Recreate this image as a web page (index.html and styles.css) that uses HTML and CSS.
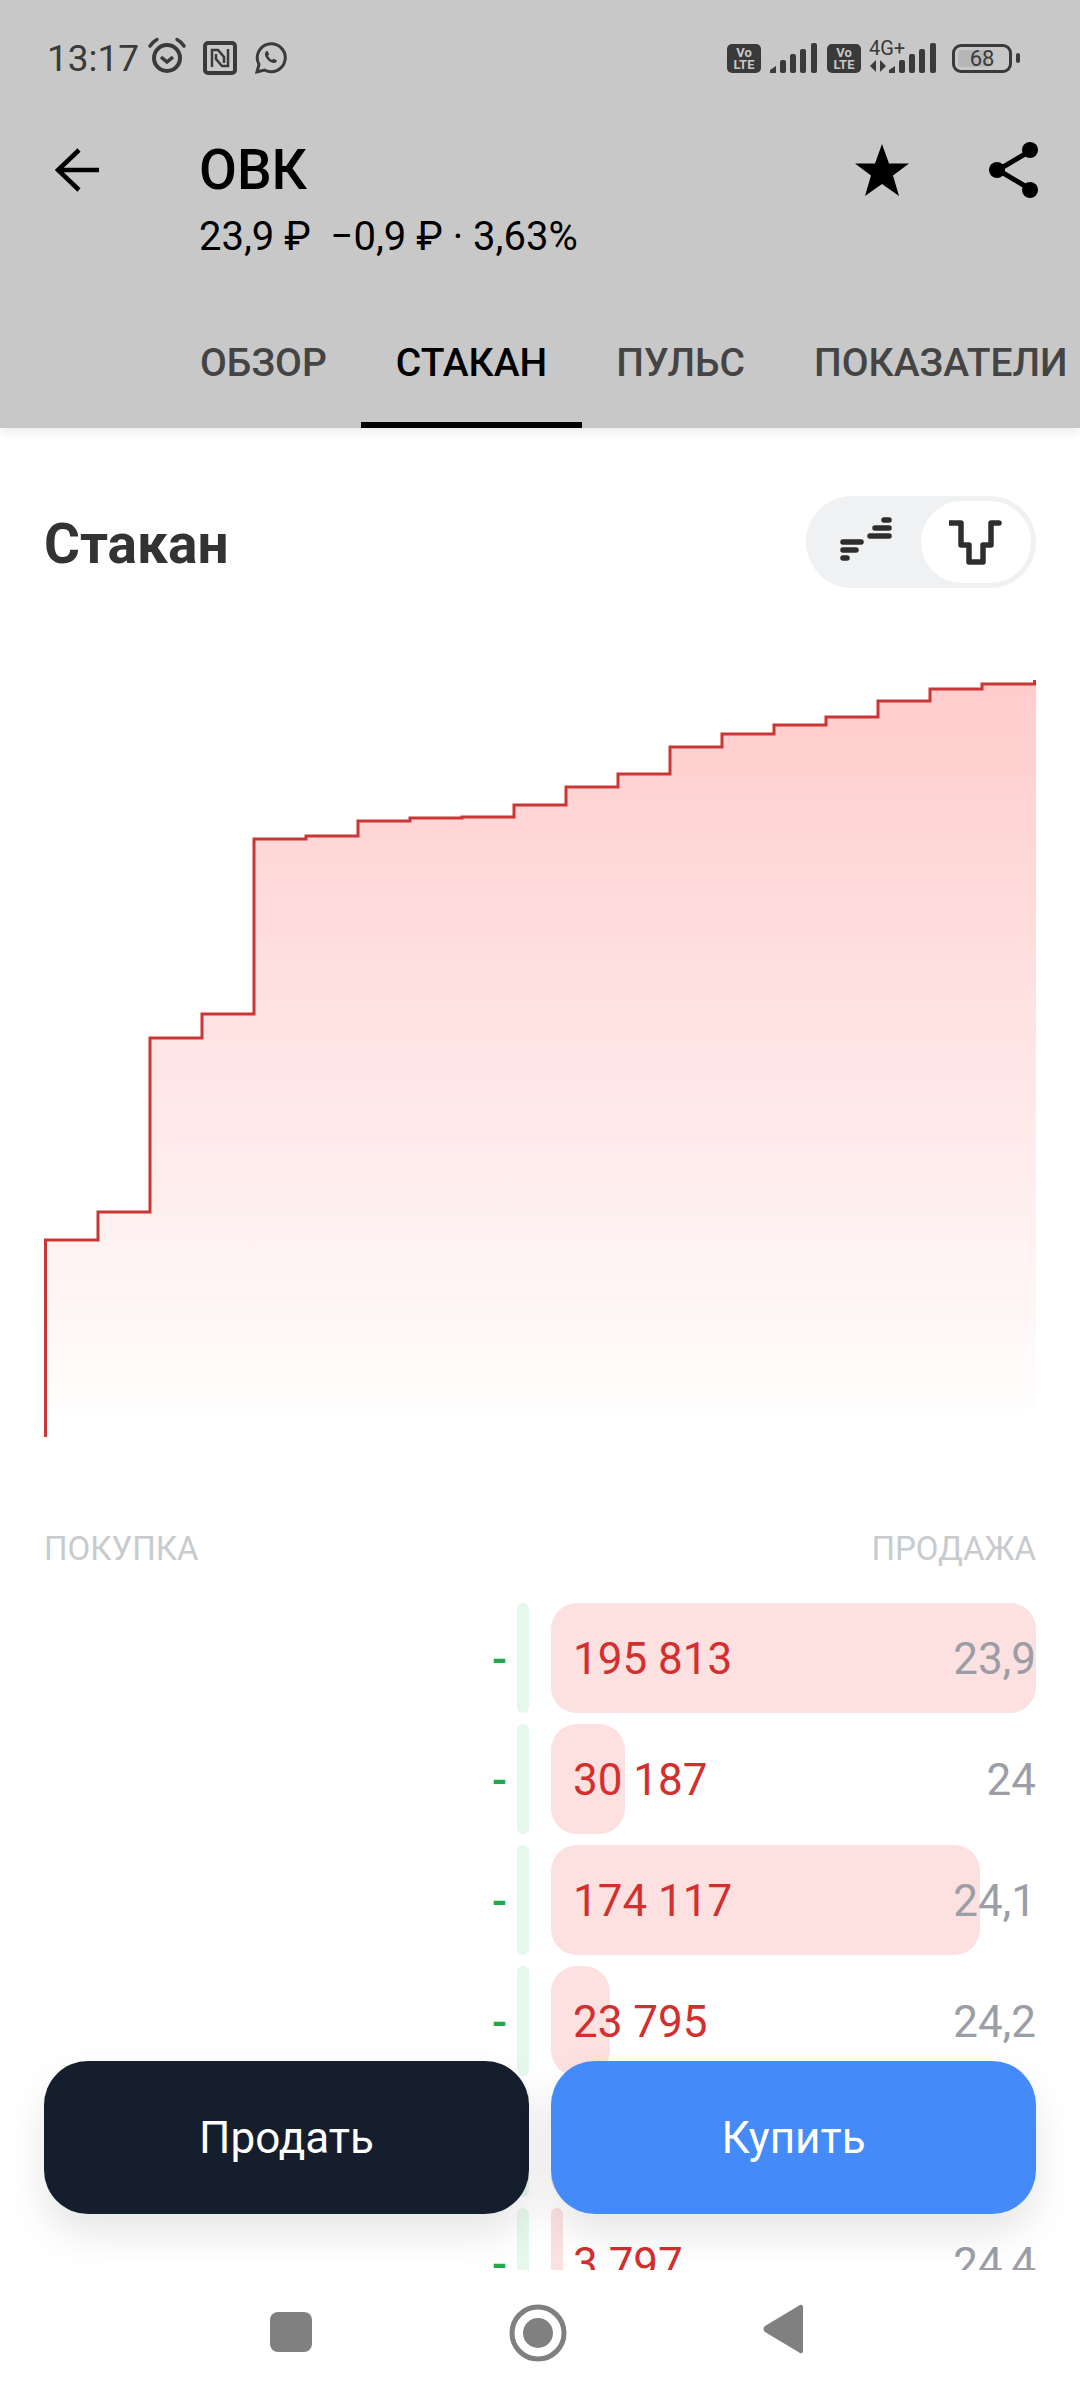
FILE: index.html
```html
<!DOCTYPE html>
<html lang="ru">
<head>
    <meta charset="UTF-8">
    <meta name="viewport" content="width=device-width, initial-scale=1.0">
    <title>ОВК - Стакан</title>
    <link rel="stylesheet" href="styles.css">
</head>
<body>
<div class="screen">

    <!-- Dimmed top part -->
    <header class="top">
        <div class="status">
            <div class="status-left">
                <span class="clock">13:17</span>
                <svg class="st-alarm" width="40" height="40" viewBox="0 0 40 40" fill="none" stroke="#3a3a3a">
                    <circle cx="20" cy="22" r="13" stroke-width="4"/>
                    <path d="M14 21l6 5 6-5" stroke-width="3.500"/>
                    <path d="M3 10c2-3 4-5 7-6.500M37 10c-2-3-4-5-7-6.500" stroke-width="3.500" stroke-linecap="round"/>
                </svg>
                <svg class="st-nfc" width="34" height="34" viewBox="0 0 34 34" fill="none" stroke="#3a3a3a">
                    <rect x="2" y="2" width="30" height="30" rx="3" stroke-width="4"/>
                    <path d="M9 26V9h6l6 7v6" stroke-width="2.500"/>
                    <path d="M25 8v17h-6l-6-7v-5" stroke-width="2.500"/>
                </svg>
                <svg class="st-wa" width="34" height="34" viewBox="0 0 34 34" fill="none">
                    <path d="M3 31l2-7.500a14 14 0 1 1 5.500 5.500z" stroke="#3a3a3a" stroke-width="3"/>
                    <path fill="#3a3a3a" d="M12 10.500c.6-.6 1.600-.6 2 .2l1 2.200c.2.500 0 1-.4 1.300l-.7.6c.9 1.800 2.300 3.200 4.200 4.200l.7-.8c.3-.4.9-.5 1.300-.3l2.200 1.100c.7.4.8 1.300.2 1.900-1 1.100-2.500 1.400-4 .9-3.600-1.200-6.300-3.900-7.400-7.400-.4-1.300 0-2.900.9-3.900z"/>
                </svg>
            </div>
            <div class="status-right">
                <span class="volte">Vo<br>LTE</span>
                <svg class="signal" width="47" height="30" viewBox="0 0 47 30" fill="#3a3a3a">
                    <path d="M0 30v-3l6-4v7z"/>
                    <rect x="10" y="17" width="6" height="13" rx="2"/>
                    <rect x="20" y="11" width="6" height="19" rx="2"/>
                    <rect x="30" y="6" width="6" height="24" rx="2"/>
                    <rect x="41" y="0" width="6" height="30" rx="2"/>
                </svg>
                <span class="volte volte-second">Vo<br>LTE</span>
                <div class="net">
                    <span class="net-label">4G+</span>
                    <svg class="net-arrows" width="16" height="12" viewBox="0 0 16 12" fill="#3a3a3a">
                        <path d="M6 0v12L0 6z"/>
                        <path d="M10 12V0l6 6z"/>
                    </svg>
                    <svg class="net-bars" width="47" height="30" viewBox="0 0 47 30" fill="#3a3a3a">
                        <path d="M0 30v-3l6-4v7z"/>
                        <rect x="10" y="17" width="6" height="13" rx="2"/>
                        <rect x="20" y="11" width="6" height="19" rx="2"/>
                        <rect x="30" y="6" width="6" height="24" rx="2"/>
                        <rect x="41" y="0" width="6" height="30" rx="2"/>
                    </svg>
                </div>
                <div class="battery">
                    <div class="battery-body">
                        <div class="battery-fill"></div>
                        <span class="battery-num">68</span>
                    </div>
                    <div class="battery-nub"></div>
                </div>
            </div>
        </div>

        <div class="title-row">
            <svg class="back" width="44" height="44" viewBox="0 0 44 44" fill="none" stroke="#000" stroke-width="4.500">
                <path d="M44 22H4M24 2L3 22l21 20"/>
            </svg>
            <div class="title-text">
                <div class="ticker">ОВК</div>
                <div class="quote">23,9 ₽ &nbsp;−0,9 ₽ · 3,63%</div>
            </div>
            <div class="title-actions">
                <svg width="54" height="52" viewBox="0 0 54 52" fill="#000">
                    <path d="M27 0l7 19.500h20L38 31.500 44 52 27 40 10 52l6-20.500L0 19.500h20z"/>
                </svg>
                <svg class="share" width="50" height="56" viewBox="0 0 50 56" fill="#000" stroke="#000">
                    <path d="M41 9L9 28l32 19" fill="none" stroke-width="5"/>
                    <circle cx="41" cy="8" r="8" stroke="none"/>
                    <circle cx="8" cy="28" r="8" stroke="none"/>
                    <circle cx="41" cy="48" r="8" stroke="none"/>
                </svg>
            </div>
        </div>

        <nav class="tabs">
            <div class="tab">ОБЗОР</div>
            <div class="tab tab-active">СТАКАН</div>
            <div class="tab">ПУЛЬС</div>
            <div class="tab">ПОКАЗАТЕЛИ</div>
        </nav>
    </header>

    <main class="content">
        <div class="section-head">
            <h2>Стакан</h2>
            <div class="toggle">
                <div class="toggle-item">
                    <svg class="toggle-steps" width="52" height="44" viewBox="0 0 52 44" fill="none" stroke="#2e2e2e" stroke-width="5.500" stroke-linecap="round">
                        <path d="M3 25h18M3 33h13M3 41h4M44 3h5M35 11h14M30 19h19"/>
                    </svg>
                </div>
                <div class="toggle-item toggle-on">
                    <svg width="54" height="46" viewBox="0 0 54 46" fill="none" stroke="#2e2e2e" stroke-width="5.500" stroke-linecap="round" stroke-linejoin="round">
                        <path d="M1 4h11v22h8v17h14V26h8V4h8"/>
                    </svg>
                </div>
            </div>
        </div>

        <!-- Depth chart -->
        <svg class="chart" width="992" height="760" viewBox="0 0 992 760">
            <defs>
                <linearGradient id="depth-fill" x1="0" y1="0" x2="0" y2="1">
                    <stop offset="0" stop-color="#ffcccc"/>
                    <stop offset="1" stop-color="#ffffff"/>
                </linearGradient>
            </defs>
            <path fill="url(#depth-fill)" d="M1.500 760V562H54V534H106V360H158V336H210V161H262V158H314V143H366V140H418V139H470V127H522V109H574V96H626V69H678V56H730V47H782V39H834V23H886V11H938V6H992V760z"/>
            <path fill="none" stroke="#c93636" stroke-width="3" d="M1.500 759V562H54V534H106V360H158V336H210V161H262V158H314V143H366V140H418V139H470V127H522V109H574V96H626V69H678V56H730V47H782V39H834V23H886V11H938V6H990.500V2"/>
        </svg>

        <div class="book-head">
            <span>ПОКУПКА</span>
            <span>ПРОДАЖА</span>
        </div>

        <div class="book">
            <div class="row">
                <div class="buy">-</div>
                <div class="buy-bar"></div>
                <div class="sell">
                    <div class="sell-bar" style="width: 485px"></div>
                    <span class="qty">195 813</span>
                    <span class="price">23,9</span>
                </div>
            </div>
            <div class="row">
                <div class="buy">-</div>
                <div class="buy-bar"></div>
                <div class="sell">
                    <div class="sell-bar" style="width: 74px"></div>
                    <span class="qty">30 187</span>
                    <span class="price">24</span>
                </div>
            </div>
            <div class="row">
                <div class="buy">-</div>
                <div class="buy-bar"></div>
                <div class="sell">
                    <div class="sell-bar" style="width: 429px"></div>
                    <span class="qty">174 117</span>
                    <span class="price">24,1</span>
                </div>
            </div>
            <div class="row">
                <div class="buy">-</div>
                <div class="buy-bar"></div>
                <div class="sell">
                    <div class="sell-bar" style="width: 59px"></div>
                    <span class="qty">23 795</span>
                    <span class="price">24,2</span>
                </div>
            </div>
            <div class="row">
                <div class="buy">-</div>
                <div class="buy-bar"></div>
                <div class="sell">
                    <div class="sell-bar" style="width: 40px"></div>
                    <span class="price">24,3</span>
                </div>
            </div>
            <div class="row">
                <div class="buy">-</div>
                <div class="buy-bar"></div>
                <div class="sell">
                    <div class="sell-bar" style="width: 12px"></div>
                    <span class="qty">3 797</span>
                    <span class="price">24,4</span>
                </div>
            </div>
        </div>

        <!-- Floating buttons -->
        <div class="actions">
            <button class="btn btn-sell">Продать</button>
            <button class="btn btn-buy">Купить</button>
        </div>
    </main>

    <footer class="navbar">
        <div class="nav-square"></div>
        <svg width="58" height="58" viewBox="0 0 58 58" fill="#808080">
            <circle cx="29" cy="29" r="26" fill="none" stroke="#808080" stroke-width="5"/>
            <circle cx="29" cy="29" r="15"/>
        </svg>
        <svg width="40" height="50" viewBox="0 0 40 50" fill="#808080">
            <path d="M37 1c1.500-.8 3 .2 3 2v44c0 1.800-1.500 2.800-3 2L2 28c-2-1.500-2-4.500 0-6z"/>
        </svg>
    </footer>
</div>
</body>
</html>
```

FILE: styles.css
```css
* {
    box-sizing: border-box;
}
body {
    margin: 0;
    background-color: white;
    font-family: Roboto, "Noto Sans", sans-serif;
}
.screen {
    width: 1080px;
    height: 2400px;
    display: flex;
    flex-direction: column;
    overflow: hidden;
}

/* Top */
.top {
    background-color: #c8c8c8;
    box-shadow: 0 4px 10px rgba(0, 0, 0, 0.08);
    position: relative;
    z-index: 2;
    flex: none;
}
.status {
    height: 116px;
    display: flex;
    align-items: center;
    justify-content: space-between;
    padding: 0 60px 0 47px;
    color: #3a3a3a;
}
.status-left {
    display: flex;
    align-items: center;
}
.clock {
    font-size: 37px;
    width: 100px;
}
.st-alarm {
    margin-top: -4px;
}
.st-nfc {
    margin-left: 16px;
}
.st-wa {
    margin-left: 17px;
}
.status-right {
    display: flex;
    align-items: center;
}
.volte {
    width: 34px;
    height: 29px;
    background-color: #3a3a3a;
    border-radius: 5px;
    color: #c8c8c8;
    font-size: 13px;
    font-weight: 700;
    line-height: 12px;
    text-align: center;
    padding-top: 3px;
}
.signal {
    margin-left: 9px;
}
.volte-second {
    margin-left: 10px;
}
.net {
    width: 67px;
    height: 30px;
    margin-left: 8px;
    position: relative;
}
.net-label {
    position: absolute;
    left: 0;
    top: -5px;
    font-size: 20px;
    line-height: 20px;
}
.net-arrows {
    position: absolute;
    left: 1px;
    bottom: 1px;
}
.net-bars {
    position: absolute;
    right: 0;
    bottom: 0;
}
.battery {
    display: flex;
    align-items: center;
    margin-left: 16px;
}
.battery-body {
    width: 60px;
    height: 29px;
    border: 3px solid #3a3a3a;
    border-radius: 9px;
    position: relative;
    display: flex;
    align-items: center;
    justify-content: center;
}
.battery-fill {
    position: absolute;
    left: 3px;
    top: 3px;
    bottom: 3px;
    width: 31px;
    background-color: #b6b6b6;
    border-radius: 3px;
}
.battery-num {
    position: relative;
    font-size: 22px;
}
.battery-nub {
    width: 4px;
    height: 10px;
    margin-left: 4px;
    background-color: #3a3a3a;
    border-radius: 2px;
}

.title-row {
    display: flex;
    align-items: flex-start;
    padding: 22px 41px 0 55px;
}
.back {
    margin-top: 10px;
    flex: none;
}
.title-text {
    margin-left: 100px;
}
.ticker {
    font-size: 55px;
    font-weight: 500;
    line-height: 64px;
    color: black;
}
.quote {
    margin-top: 13px;
    font-size: 40px;
    line-height: 44px;
    color: black;
    white-space: nowrap;
}
.title-actions {
    margin-left: auto;
    height: 64px;
    display: flex;
    align-items: center;
}
.share {
    margin-left: 80px;
}

.tabs {
    display: flex;
    padding-left: 165.5px;
    white-space: nowrap;
}
.tab {
    padding: 82px 34.5px 37px;
    font-size: 39px;
    font-weight: 500;
    line-height: 44px;
    color: #444;
    border-bottom: 6px solid transparent;
}
.tab-active {
    color: black;
    border-bottom-color: black;
}

/* Content */
.content {
    flex: 1;
    min-height: 0;
    position: relative;
    overflow: hidden;
    padding: 68px 44px 0;
}
.section-head {
    display: flex;
    align-items: center;
    justify-content: space-between;
    height: 92px;
}
.section-head h2 {
    margin: 4px 0 0;
    font-size: 55px;
    font-weight: 700;
    color: #333;
}
.toggle {
    width: 230px;
    height: 92px;
    padding: 5px;
    border-radius: 46px;
    background-color: #eff1f3;
    display: flex;
    justify-content: space-between;
}
.toggle-item {
    width: 110px;
    display: flex;
    align-items: center;
    justify-content: center;
}
.toggle-steps {
    margin-bottom: 6px;
}
.toggle-on {
    background-color: white;
    border-radius: 41px;
}
.chart {
    display: block;
    margin-top: 90px;
}
.book-head {
    display: flex;
    justify-content: space-between;
    margin-top: 91px;
    font-size: 33px;
    line-height: 40px;
    color: #c8cbcd;
}
.book {
    margin-top: 34px;
    display: flex;
    flex-direction: column;
    gap: 11px;
}
.row {
    display: flex;
    height: 110px;
    align-items: center;
}
.buy {
    width: 463px;
    padding-top: 2px;
    text-align: right;
    font-size: 44px;
    font-weight: 500;
    color: #22a845;
}
.buy-bar {
    width: 12px;
    height: 110px;
    margin-left: 10px;
    margin-right: 22px;
    background-color: #e6f7ec;
    border-radius: 6px;
}
.sell {
    flex: 1;
    height: 110px;
    position: relative;
    display: flex;
    align-items: center;
    justify-content: space-between;
    padding: 2px 0 0 22px;
    font-size: 44px;
}
.sell-bar {
    position: absolute;
    left: 0;
    top: 0;
    bottom: 0;
    background-color: #fde0e0;
    border-radius: 26px;
}
.qty {
    position: relative;
    color: #d32f2f;
}
.price {
    position: relative;
    margin-left: auto;
    color: #9b9ea6;
}
.actions {
    position: absolute;
    left: 44px;
    right: 44px;
    bottom: 56px;
    display: flex;
    gap: 22px;
}
.btn {
    flex: 1;
    height: 153px;
    border: none;
    border-radius: 44px;
    color: white;
    font-family: inherit;
    font-size: 44px;
    box-shadow: 0 20px 40px rgba(0, 0, 0, 0.1);
}
.btn-sell {
    background-color: #151e2d;
}
.btn-buy {
    background-color: #448af8;
}

/* Bottom navigation */
.navbar {
    flex: none;
    height: 130px;
    padding: 34px 277px 0 270px;
    background-color: white;
    display: flex;
    justify-content: space-between;
    align-items: flex-start;
    position: relative;
    z-index: 2;
}
.nav-square {
    width: 42px;
    height: 40px;
    margin-top: 8px;
    background-color: #808080;
    border-radius: 8px;
}
```
